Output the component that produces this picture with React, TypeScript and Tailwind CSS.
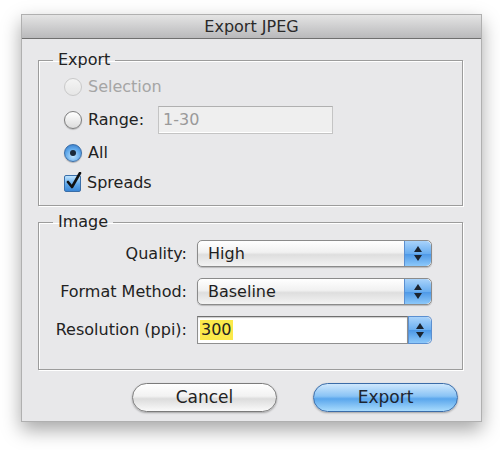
import React from "react";

const font = { fontFamily: '"DejaVu Sans", "Liberation Sans", sans-serif' };

const Radio = ({ state }: { state: "disabled" | "off" | "on" }) => {
    if (state === "on") {
        return (
            <span className="w-[18px] h-[18px] rounded-full border border-[#3a6ea8] bg-[radial-gradient(circle_at_50%_70%,#bfe4ff_0%,#5fa8ea_55%,#2c6fc0_100%)] flex items-center justify-center shadow-[0_1px_1px_rgba(0,0,0,0.25)]">
                <span className="w-[6px] h-[6px] rounded-full bg-[#1a2a3a]" />
            </span>
        );
    }
    return (
        <span
            className={`w-[18px] h-[18px] rounded-full border ${state === "disabled" ? "border-[#c9c9c9] bg-[linear-gradient(#f4f4f4,#e6e6e6)]" : "border-[#7d7d7d] bg-[linear-gradient(#ffffff,#dcdcdc)] shadow-[0_1px_1px_rgba(0,0,0,0.2)]"}`}
        />
    );
};

const Stepper = () => (
    <span className="w-[27px] h-full rounded-r-[5px] border-l border-[#5b8fd0] bg-[linear-gradient(#a9d3fb,#6aaef0_50%,#4c97e6_51%,#8cc8fa)] flex flex-col items-center justify-center gap-[3px]">
        <svg width="8" height="6" viewBox="0 0 8 6"><path d="M4 0 L8 6 L0 6 Z" fill="#1b2430" /></svg>
        <svg width="8" height="6" viewBox="0 0 8 6"><path d="M0 0 L8 0 L4 6 Z" fill="#1b2430" /></svg>
    </span>
);

const Select = ({ value }: { value: string }) => (
    <div className="w-[235px] h-[27px] rounded-[5px] border border-[#8b8b8b] bg-[linear-gradient(#ffffff,#f1f1f1_45%,#dedede_55%,#f3f3f3)] flex items-center shadow-[0_1px_1px_rgba(0,0,0,0.2)] overflow-hidden">
        <span className="flex-1 pl-[10px] text-[16px] text-[#1e1e1e]">{value}</span>
        <Stepper />
    </div>
);

const App = () => {
    return (
        <div className="w-[500px] h-[450px] bg-white pt-[14px] pl-[21px]" style={font}>
            <div className="w-[461px] h-[408px] bg-[#e8e8ea] border border-[#b0b0b0] shadow-[0_8px_18px_rgba(0,0,0,0.35)] flex flex-col">
                <div className="h-[24px] bg-[linear-gradient(#e4e4e4,#b9b9bb)] border-b border-[#6f6f6f] flex items-center justify-center text-[16px] text-[#2a2a2a]">
                    Export JPEG
                </div>

                <div className="pl-[16px] pr-[18px] pt-[12px] flex flex-col">
                    <fieldset className="h-[155px] border border-[#9c9c9c] shadow-[inset_1px_1px_0_#ffffff,1px_1px_0_#ffffff]">
                        <legend className="ml-[14px] px-[5px] text-[16px] leading-[18px] text-[#222]">Export</legend>
                        <div className="flex flex-col mt-[2px] pl-[25px]">
                            <div className="h-[32px] flex items-center gap-[6px] text-[16px] text-[#a5a5a5]">
                                <Radio state="disabled" />
                                <span>Selection</span>
                            </div>
                            <div className="h-[34px] flex items-center text-[16px] text-[#222]">
                                <Radio state="off" />
                                <span className="ml-[6px] w-[70px]">Range:</span>
                                <div className="w-[175px] h-[28px] border border-[#c4c4c4] border-t-[#b0b0b0] bg-[#efefef] flex items-center pl-[4px] text-[#9a9a9a] shadow-[inset_0_-1px_0_#ffffff]">
                                    1-30
                                </div>
                            </div>
                            <div className="h-[31px] flex items-center gap-[6px] text-[16px] text-[#222]">
                                <Radio state="on" />
                                <span>All</span>
                            </div>
                            <div className="h-[30px] flex items-center gap-[6px] text-[16px] text-[#222]">
                                <span className="w-[17px] h-[17px] rounded-[2px] border border-[#3a6ea8] bg-[linear-gradient(#bfe4ff,#5fa8ea_55%,#3a86d6)] relative">
                                    <svg className="absolute -top-[4px] left-[1px]" width="16" height="18" viewBox="0 0 16 18">
                                        <path d="M2 10 L6 15 L14 1" stroke="#111" strokeWidth="2.6" fill="none" strokeLinecap="round" strokeLinejoin="round" />
                                    </svg>
                                </span>
                                <span>Spreads</span>
                            </div>
                        </div>
                    </fieldset>

                    <fieldset className="mt-[7px] h-[157px] border border-[#9c9c9c] shadow-[inset_1px_1px_0_#ffffff,1px_1px_0_#ffffff]">
                        <legend className="ml-[14px] px-[5px] text-[16px] leading-[18px] text-[#222]">Image</legend>
                        <div className="flex flex-col gap-[11px] mt-[9px] text-[16px] text-[#222]">
                            <div className="flex items-center">
                                <span className="w-[158px] text-right pr-[10px]">Quality:</span>
                                <Select value="High" />
                            </div>
                            <div className="flex items-center">
                                <span className="w-[158px] text-right pr-[10px]">Format Method:</span>
                                <Select value="Baseline" />
                            </div>
                            <div className="flex items-center">
                                <span className="w-[158px] text-right pr-[10px] whitespace-nowrap">Resolution (ppi):</span>
                                <div className="w-[235px] h-[28px] flex items-stretch">
                                    <div className="flex-1 border border-[#8f8f8f] border-t-[#6f6f6f] bg-white flex items-center pl-[2px] shadow-[inset_0_1px_1px_rgba(0,0,0,0.2)]">
                                        <span className="bg-[#fbe94a] px-[1px] leading-[20px]">300</span>
                                    </div>
                                    <div className="w-[24px] rounded-r-[5px] border border-l-0 border-[#5b8fd0] overflow-hidden flex">
                                        <Stepper />
                                    </div>
                                </div>
                            </div>
                        </div>
                    </fieldset>

                    <div className="flex gap-[36px] pl-[94px] mt-[13px]">
                        <button className="w-[145px] h-[29px] rounded-full border border-[#7b7b7b] bg-[linear-gradient(#ffffff,#f2f2f2_45%,#dcdcdc_55%,#fafafa)] text-[17px] text-[#222] shadow-[0_1px_2px_rgba(0,0,0,0.3)]">
                            Cancel
                        </button>
                        <button className="w-[145px] h-[29px] rounded-full border border-[#3b6ca8] bg-[linear-gradient(#cfe8fd,#89c3f5_45%,#5aa6ec_55%,#a8dbfd)] text-[17px] text-[#1d2530] shadow-[0_1px_2px_rgba(0,0,0,0.3)]">
                            Export
                        </button>
                    </div>
                </div>
            </div>
        </div>
    );
};

export default App;
